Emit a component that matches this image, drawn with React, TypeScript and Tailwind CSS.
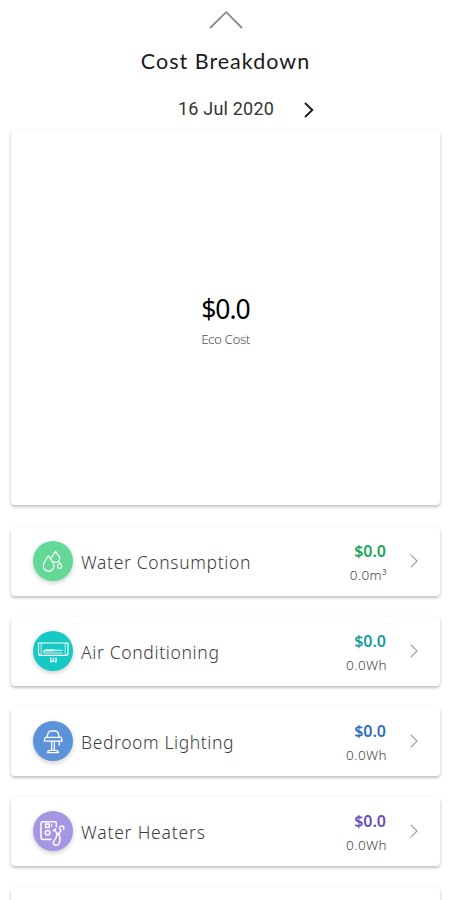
import type {ReactNode} from "react";

type Appliance = {
    id: number
    name: string
    cost: string
    usage: string
    circle: string
    costColor: string
    tracking: string
    icon: ReactNode
}

function DropsIcon() {
    return (
        <svg viewBox="0 0 40 40" className="size-10" fill="none" stroke="white" strokeWidth="1.2" strokeLinejoin="round">
            <path d="M15.5 14.8C13.3 18.5 10.3 21.2 10.3 25a5.3 5.3 0 0 0 10.6 0C20.9 21.2 17.7 18.5 15.5 14.8Z"/>
            <path d="M18.2 17.2C19.3 14.5 21.3 12.8 22.6 10.4c1.6 3 4.2 5 4.2 7.4a3.9 3.9 0 0 1-6.4 2.6"/>
            <path d="M26.6 21.5c-1.2 1.6-2.1 2.5-2.1 3.8a2.1 2.1 0 0 0 4.2 0c0-1.3-1-2.2-2.1-3.8Z"/>
        </svg>
    )
}

function AirConIcon() {
    return (
        <svg viewBox="0 0 40 40" className="size-10" fill="none" stroke="white" strokeWidth="1.2" strokeLinejoin="round">
            <path d="M5.5 12h29.5v10.3q0 2-2 2H7.5q-2 0-2-2Z"/>
            <path d="M8.2 12v12M32.2 12v12" opacity=".6"/>
            <path d="M11 22v-2.6h18.5M29.5 22h-18.5" opacity=".8"/>
            <path d="M12.5 19.4h9" strokeWidth="1.8"/>
            <path d="M17.8 26.5v5M20.4 26.5v4M23 26.5v5M17.8 31.2l2-1.2M23 31.2l-2-1.2"/>
        </svg>
    )
}

function LampIcon() {
    return (
        <svg viewBox="0 0 40 40" className="size-10" fill="none" stroke="white" strokeWidth="1.3" strokeLinejoin="round">
            <path d="M14.3 16c.2-3.8 1.4-6 3.7-6h4.3c2.3 0 3.4 2.2 3.7 6"/>
            <path d="M12.2 16.3h16l1 3.8H11.2Z"/>
            <path d="M18.6 20v9.5M21.3 20v9.5M26.2 20v4.7"/>
            <path d="M14.5 31.6q.2-2.2 2.4-2.2h6q2.1 0 2.4 2.2Z"/>
        </svg>
    )
}

function HeaterIcon() {
    return (
        <svg viewBox="0 0 40 40" className="size-10" fill="none" stroke="white" strokeWidth="1.5" strokeLinejoin="round" strokeLinecap="round">
            <path d="M23.3 15.5v-3q0-1.7-1.7-1.7H9.7q-1.7 0-1.7 1.7v14.2q0 1.7 1.7 1.7H18"/>
            <rect x="12.6" y="13" width="3.6" height="3.6"/>
            <circle cx="14.6" cy="21.8" r="2.3"/>
            <path d="M18.8 13v2.6" strokeWidth="1.1"/>
            <path d="m21.3 18.7 3.7 5 3-3.9M20.3 19.6l2.5-1.8M28 19.7c-2.2-1.6-1.8-4.2.3-4.7 2-.4 3.5 1.4 2.3 3.1M26.2 23.4c1.3 3.8 1.2 10.3-2.7 10.8-3.2.4-4-2.7-2.4-4.4 1.5-1.4 2.6-3.2 2.7-6.2"/>
        </svg>
    )
}

const appliances: Appliance[] = [
    {id: 1, name: "Water Consumption", cost: "$0.0", usage: "0.0m³", circle: "bg-[#64d897]", costColor: "text-[#1ba65c]", tracking: "tracking-[0.65px]", icon: <DropsIcon/>},
    {id: 2, name: "Air Conditioning", cost: "$0.0", usage: "0.0Wh", circle: "bg-[#16c9c4]", costColor: "text-[#159e9f]", tracking: "tracking-[0.65px]", icon: <AirConIcon/>},
    {id: 3, name: "Bedroom Lighting", cost: "$0.0", usage: "0.0Wh", circle: "bg-[#5b92d9]", costColor: "text-[#306fbe]", tracking: "tracking-[0.6px]", icon: <LampIcon/>},
    {id: 4, name: "Water Heaters", cost: "$0.0", usage: "0.0Wh", circle: "bg-[#a596e4]", costColor: "text-[#6750bd]", tracking: "tracking-[0.8px]", icon: <HeaterIcon/>},
]

const cardShadow = "rounded-[4px] bg-white shadow-[0_2px_3px_rgba(0,0,0,0.2),0_1px_4px_rgba(0,0,0,0.07)]"

function ApplianceCard({name, cost, usage, circle, costColor, tracking, icon}: Appliance) {
    return (
        <div className={`flex h-[69px] shrink-0 items-center px-[22px] pb-0.5 ${cardShadow}`}>
            <div className={`size-10 shrink-0 rounded-full shadow-[0_2px_5px_rgba(0,0,0,0.2)] ${circle}`}>{icon}</div>
            <span className={`ml-2 mt-1 flex-1 whitespace-nowrap text-[17.5px] font-light text-[#3c3c3c] ${tracking}`}>{name}</span>
            <div className="flex flex-col items-end pt-0.5">
                <span className={`mt-0.5 text-[16px] leading-6 font-semibold ${costColor}`}>{cost}</span>
                <span className="-mr-px text-[13.5px] leading-6 font-light tracking-[0.4px] text-[#444]">{usage}</span>
            </div>
            <svg viewBox="0 0 8 14" className="ml-6 h-3.5 w-2" fill="none" stroke="#a3a3a3" strokeWidth="1.2">
                <path d="m.7.8 6.4 6.2-6.4 6.2"/>
            </svg>
        </div>
    )
}

function App() {
    return (
        <div className="flex h-[900px] w-[450px] flex-col overflow-hidden bg-white pl-[11px] pr-[10px] font-['Noto_Sans',sans-serif]">
            <svg viewBox="0 0 34 18" className="ml-[198px] mt-[11px] h-[18px] w-[34px] shrink-0" fill="none" stroke="#8a8a8a" strokeWidth="1.8">
                <path d="M1 17 17.2 1.2 33 17"/>
            </svg>
            <h1 className="mt-[18px] shrink-0 text-center font-['Lato',sans-serif] text-[21.5px] leading-7 tracking-[1px] text-[#1a1a1a]">Cost Breakdown</h1>
            <div className="mt-[18px] flex h-[30px] shrink-0 items-center pl-[167px] font-['Roboto',sans-serif]">
                <span className="w-[97px] whitespace-nowrap text-[18px] tracking-[0.2px] text-[#333]">16 Jul 2020</span>
                <svg viewBox="0 0 10 16" className="ml-[29px] mt-[3px] h-4 w-2.5" fill="none" stroke="#1c1c1c" strokeWidth="1.9">
                    <path d="m1 1 7.3 7L1 15"/>
                </svg>
            </div>

            <div className={`mt-[7px] flex h-[375px] shrink-0 flex-col items-center pt-[161px] ${cardShadow}`}>
                <span className="text-[26.5px] leading-9 tracking-[-1px] text-black">$0.0</span>
                <span className="text-[13.5px] leading-6 font-light tracking-[-0.5px] text-[#555]">Eco Cost</span>
            </div>

            <div className="mt-[22px] flex flex-col gap-[21px]">
                {appliances.map((appliance) => (
                    <ApplianceCard key={appliance.id} {...appliance}/>
                ))}
                <div className={`h-[69px] shrink-0 ${cardShadow}`}></div>
            </div>
        </div>
    )
}


export default App;
